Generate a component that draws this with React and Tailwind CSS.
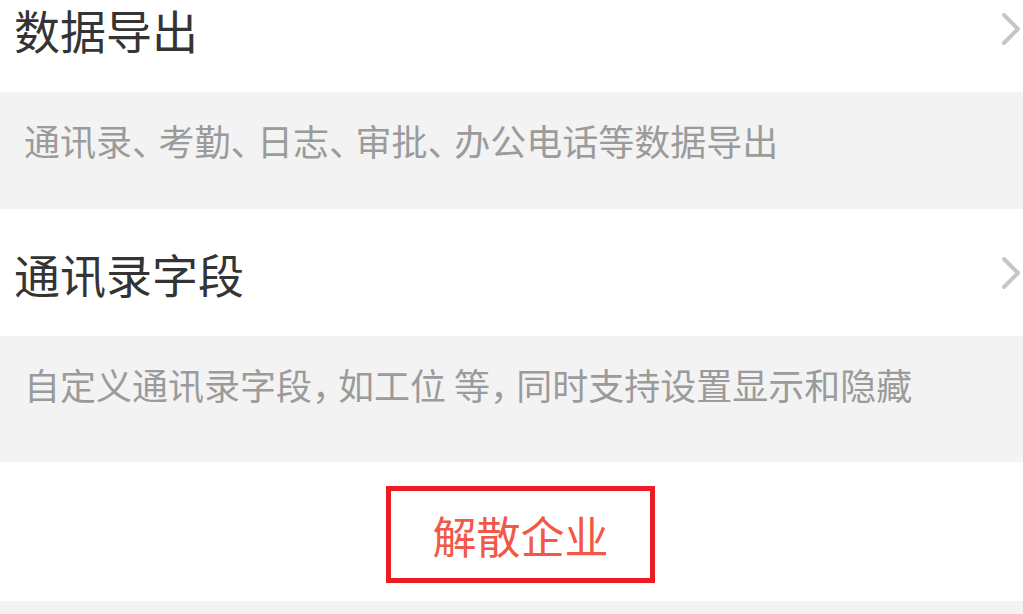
const Chevron = () => (
  <svg width="20" height="34" viewBox="0 0 20 34" fill="none" className="shrink-0">
    <polyline points="3,3 17,17 3,31" stroke="#c6c6c6" strokeWidth="4" strokeLinecap="round" strokeLinejoin="round" />
  </svg>
)

function SettingRow({ title, className }) {
  return (
    <div className={`flex items-center justify-between bg-white pl-[14px] pr-[2px] h-[127px] ${className || ''}`}>
      <span className="text-[46px] leading-none text-[#343434]">{title}</span>
      <Chevron />
    </div>
  )
}

// the punctuation in the screenshot is narrower than a full CJK cell
const Dun = () => <span className="tracking-[-9.5px]">、</span>
const Comma = () => <span className="tracking-[-10px]">，</span>

function Desc({ children, h }) {
  return (
    <div className={`bg-[#f3f3f3] pl-[24px] pt-[30px] ${h}`}>
      <p className="text-[36px] leading-none text-[#9b9b9b] whitespace-nowrap">{children}</p>
    </div>
  )
}

export default function App() {
  return (
    <div
      className="w-[1023px] h-[614px] overflow-hidden bg-[#f3f3f3]"
      style={{ fontFamily: '"Noto Sans CJK SC", "Noto Sans", sans-serif' }}
    >
      <SettingRow title="数据导出" className="-mt-[35px]" />
      <Desc h="h-[117px]">
        通讯录<Dun />考勤<Dun />日志<Dun />审批<Dun />办公电话等数据导出
      </Desc>
      <SettingRow title="通讯录字段" />
      <Desc h="h-[126px]">
        自定义通讯录字段<Comma />如工位 等<Comma />同时支持设置显示和隐藏
      </Desc>
      <div className="bg-white h-[139px] flex items-center justify-center">
        <button className="w-[269px] h-[97px] mt-[6px] ml-[18px] border-[5px] border-[#ec1c24] flex items-center justify-center text-[44px] leading-none text-[#f25747]">
          解散企业
        </button>
      </div>
    </div>
  )
}
